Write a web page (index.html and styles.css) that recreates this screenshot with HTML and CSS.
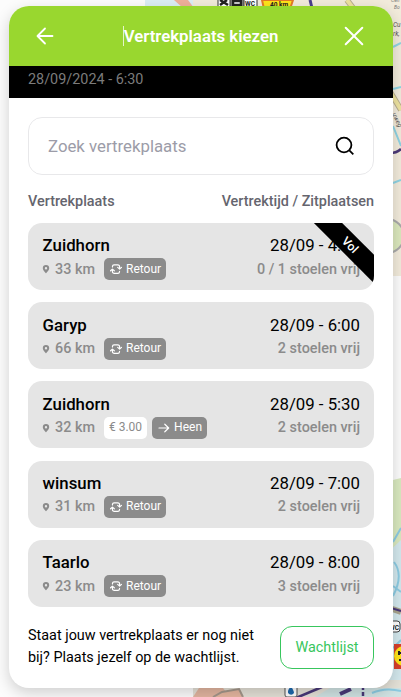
FILE: index.html
```html
<!DOCTYPE html>
<html lang="nl">
<head>
    <meta charset="UTF-8">
    <meta name="viewport" content="width=device-width, initial-scale=1.0">
    <title>Vertrekplaats kiezen</title>
    <link rel="stylesheet" href="styles.css">
</head>
<body>
    <!-- map tiles behind the panel -->
    <svg class="map" width="401" height="697" viewBox="0 0 401 697" fill="none">
        <path d="M193 0H401V276H193Z" fill="#f2ebdb"/>
        <path d="M145 0H193V9H145Z" fill="#dceef5"/>
        <path d="M174 0H188L194 8H183Z" fill="#efb09a"/>
        <path d="M310 0L312 8" stroke="#4b3f8c" stroke-width="3"/>
        <path d="M347 0L353 8M380 75L401 110" stroke="#b8ae8f" stroke-width="6"/>
        <path d="M347 0L353 8M380 75L401 110" stroke="#eee3a0" stroke-width="4"/>
        <path d="M393 47L401 43M393 89L401 87M393 126L401 146M393 183L401 180" stroke="#8fd3e3" stroke-width="2"/>
        <path d="M390 153Q397 153 401 149" stroke="#4b3a78" stroke-width="2.5"/>
        <circle cx="387" cy="236" r="17" fill="#dbe8bd" stroke="#aaa" stroke-width="2"/>
        <path d="M218 -4h12v12h-12zM231 -4h12v12h-12zM244 -4h13v12h-13z" fill="#fff" stroke="#333"/>
        <path d="M220 0l8 5M220 5l7-5M233 1h8v4h-8z" stroke="#222" stroke-width="2.5"/>
        <path d="M262 0H293L290 9H264Z" fill="#ffe51a" stroke="#e47b26" stroke-width="2"/>
        <text x="245" y="6" class="map-sign">WC</text>
        <text x="270" y="7" class="map-sign">40 km</text>
        <text x="391" y="2" class="map-label">Cen</text>
        <text x="394" y="9" class="map-label">Bo</text>
        <text x="393" y="27" class="map-label map-label-big">Cu</text>
        <text x="393" y="36" class="map-label map-label-big">rk,</text>
        <text x="392" y="114" class="map-label map-label-big" transform="rotate(65 392 114)">uweg</text>

        <path d="M385 482L401 478V697H385Z" fill="#d9e9bf"/>
        <path d="M385 555L401 540V697H385Z" fill="#d3e8ed"/>
        <path d="M393 542L401 528M393 596Q404 575 394 562M393 586L401 592M393 648L401 640" stroke="#8ccbe2" stroke-width="2"/>
        <path d="M375 603L401 612" stroke="#a9a58f" stroke-width="6"/>
        <path d="M375 603L401 611" stroke="#493878" stroke-width="2"/>
        <rect x="385" y="621" width="15" height="11" rx="3" fill="#fff" stroke="#444"/>
        <text x="389" y="630" class="map-sign">WC</text>
        <path d="M394 644h10v25h-10z" fill="#d8402c"/>
        <circle cx="404" cy="656" r="10" fill="#ffe51a"/>
        <path d="M398 653h4M399 660h3M399 651v4" stroke="#222" stroke-width="2"/>
        <path d="M193 680H401V697H193Z" fill="#e4e1d7"/>
        <path d="M193 697L199 688H223L230 697Z" fill="#e2b5a0"/>
        <path d="M213 697L222 692L239 689L243 697" fill="#e6b7a0" stroke="#a4978b" stroke-width="2"/>
        <path d="M315 697L330 688H401V697Z" fill="#d0e3e3"/>
        <path d="M296 698L322 687" stroke="#493878" stroke-width="2.5"/>
        <path d="M363 686V697" stroke="#493878" stroke-width="2.5" stroke-dasharray="4 2"/>
        <path d="M340 694L351 689" stroke="#493878" stroke-width="4"/>
        <path d="M372 693Q385 687 401 691" stroke="#8ccbe2" stroke-width="2"/>
        <rect x="285" y="683" width="12" height="14" rx="2" fill="#fff" stroke="#555"/>
        <path d="M291 686q-5 6-2 8q3 2 5-1q0-2-3-7z" fill="#1c68ad"/>
    </svg>

    <!-- shared icons -->
    <svg class="sprite">
        <symbol id="pin" viewBox="0 0 8 10">
            <path fill-rule="evenodd" d="M4 1a3.2 3.2 0 0 0-3.2 3.2C.8 6.4 4 9.2 4 9.2s3.2-2.8 3.2-5A3.2 3.2 0 0 0 4 1zm0 2a1.2 1.2 0 1 1 0 2.4A1.2 1.2 0 0 1 4 3z" fill="currentColor"/>
        </symbol>
        <symbol id="retour" viewBox="0 0 12 12">
            <path d="M2.5 4V3.2q.2-1.4 1.5-1.4h3.6q2 0 2 2v2M7.7 4.4l1.9 1.7 1.9-1.7M9.5 8.4v.5q-.2 1.5-1.5 1.5H4.4q-2 0-2-2v-2M.5 7.8l1.9-1.7 1.9 1.7" fill="none" stroke="currentColor" stroke-width="1.2" stroke-linecap="round" stroke-linejoin="round"/>
        </symbol>
        <symbol id="heen" viewBox="0 0 12 12">
            <path d="M1 6h9.7M6.8 2.2L10.7 6 6.8 9.8" fill="none" stroke="currentColor" stroke-width="1.2" stroke-linecap="round" stroke-linejoin="round"/>
        </symbol>
    </svg>

    <div class="panel">
        <div class="header">
            <svg class="back" width="18" height="18" viewBox="0 0 18 18"><path d="M16.5 9H1.7M9 1.5L1.5 9 9 16.5"/></svg>
            <h1>Vertrekplaats kiezen</h1>
            <svg class="close" width="20" height="20" viewBox="0 0 20 20"><path d="M1.7 1.7l16.6 16.6M18.3 1.7L1.7 18.3"/></svg>
        </div>
        <div class="date-bar">28/09/2024 - 6:30</div>

        <div class="content">
            <div class="search">
                <span>Zoek vertrekplaats</span>
                <svg width="20" height="20" viewBox="0 0 20 20"><circle cx="9" cy="9" r="7.4"/><path d="M14.3 14.3l4 4"/></svg>
            </div>

            <div class="labels">
                <span>Vertrekplaats</span>
                <span>Vertrektijd / Zitplaatsen</span>
            </div>

            <div class="list">
                <div class="stop">
                    <div class="row"><span class="place">Zuidhorn</span><span class="time">28/09 - 4:30</span></div>
                    <div class="row info">
                        <div class="details">
                            <svg class="pin"><use href="#pin"/></svg><span class="km">33 km</span>
                            <span class="tag"><svg><use href="#retour"/></svg>Retour</span>
                        </div>
                        <span>0 / 1 stoelen vrij</span>
                    </div>
                    <div class="ribbon">Vol</div>
                </div>
                <div class="stop">
                    <div class="row"><span class="place">Garyp</span><span class="time">28/09 - 6:00</span></div>
                    <div class="row info">
                        <div class="details">
                            <svg class="pin"><use href="#pin"/></svg><span class="km">66 km</span>
                            <span class="tag"><svg><use href="#retour"/></svg>Retour</span>
                        </div>
                        <span>2 stoelen vrij</span>
                    </div>
                </div>
                <div class="stop">
                    <div class="row"><span class="place">Zuidhorn</span><span class="time">28/09 - 5:30</span></div>
                    <div class="row info">
                        <div class="details">
                            <svg class="pin"><use href="#pin"/></svg><span class="km">32 km</span>
                            <span class="tag price">€ 3.00</span>
                            <span class="tag"><svg><use href="#heen"/></svg>Heen</span>
                        </div>
                        <span>2 stoelen vrij</span>
                    </div>
                </div>
                <div class="stop">
                    <div class="row"><span class="place">winsum</span><span class="time">28/09 - 7:00</span></div>
                    <div class="row info">
                        <div class="details">
                            <svg class="pin"><use href="#pin"/></svg><span class="km">31 km</span>
                            <span class="tag"><svg><use href="#retour"/></svg>Retour</span>
                        </div>
                        <span>2 stoelen vrij</span>
                    </div>
                </div>
                <div class="stop">
                    <div class="row"><span class="place">Taarlo</span><span class="time">28/09 - 8:00</span></div>
                    <div class="row info">
                        <div class="details">
                            <svg class="pin"><use href="#pin"/></svg><span class="km">23 km</span>
                            <span class="tag"><svg><use href="#retour"/></svg>Retour</span>
                        </div>
                        <span>3 stoelen vrij</span>
                    </div>
                </div>
            </div>

            <div class="footer">
                <p>Staat jouw vertrekplaats er nog niet<br>bij? Plaats jezelf op de wachtlijst.</p>
                <button>Wachtlijst</button>
            </div>
        </div>
    </div>
</body>
</html>
```
FILE: styles.css
```css
* {
    box-sizing: border-box;
}
body {
    margin: 0;
    padding: 6px 8px 9px 9px;
    height: 697px;
    overflow: hidden;
    font-family: Roboto, "Liberation Sans", sans-serif;
    background-color: #fcfcfc;
    color: #000;
}
.map {
    position: absolute;
    top: 0;
    left: 0;
    z-index: -1;
}
.map-sign {
    font-size: 6.5px;
    font-weight: bold;
    fill: #222;
}
.map-label {
    font-size: 5px;
    font-style: italic;
    fill: #777;
}
.map-label-big {
    font-size: 6.5px;
    fill: #555;
}
.sprite {
    display: none;
}
.panel {
    height: 682px;
    background: white;
    border-radius: 20px;
    overflow: hidden;
    box-shadow: 0 5px 15px rgba(0, 0, 0, 0.18);
}
.header {
    height: 60px;
    padding: 0 29px 0 27px;
    display: flex;
    align-items: center;
    justify-content: space-between;
    background-color: #99d72f;
    color: white;
}
.header svg {
    fill: none;
    stroke: white;
    stroke-width: 1.8;
    stroke-linecap: round;
    stroke-linejoin: round;
}
.header .close {
    stroke-width: 2;
}
.header h1 {
    margin: 0 0 0 3px;
    border-left: 1px solid #e4f5c8;
    font-size: 16.8px;
    font-weight: 600;
    line-height: 20px;
}
.date-bar {
    height: 32px;
    padding: 4px 19px;
    background: black;
    color: #7c7c7c;
    font-size: 14.4px;
    line-height: 19px;
}
.content {
    padding: 19px 19px 0;
}
.search {
    height: 58px;
    padding: 0 18px 0 19px;
    display: flex;
    align-items: center;
    justify-content: space-between;
    border: 1px solid #e8e8ea;
    border-radius: 14px;
    color: #9c9ca8;
    font-size: 16.8px;
}
.search svg {
    fill: none;
    stroke: black;
    stroke-width: 1.8;
}
.labels {
    display: flex;
    justify-content: space-between;
    margin: 17px 0 11px;
    color: #65656e;
    font-size: 14.4px;
    font-weight: 500;
    line-height: 20px;
}
.list {
    display: flex;
    flex-direction: column;
    gap: 12.2px;
}
.stop {
    position: relative;
    height: 67px;
    padding: 10.4px 14px 0;
    overflow: hidden;
    background: #e5e5e5;
    border-radius: 14px;
}
.row {
    display: flex;
    justify-content: space-between;
    align-items: center;
    height: 24px;
    font-size: 16.8px;
}
.place {
    margin-left: 0.6px;
    font-weight: 500;
}
.info {
    color: #8b8b8b;
    font-size: 14.4px;
    font-weight: 500;
}
.details {
    display: flex;
    align-items: center;
}
.pin {
    width: 8px;
    height: 10px;
    margin-right: 5px;
}
.km {
    margin-right: 9px;
}
.tag {
    display: flex;
    align-items: center;
    gap: 4px;
    height: 22px;
    margin-right: 5px;
    padding: 0 5px 1px 6px;
    border-radius: 5px;
    background: #8b8b8b;
    color: white;
    font-size: 12px;
    font-weight: 450;
}
.tag svg {
    width: 12px;
    height: 12px;
    margin-top: 1px;
}
.price {
    padding: 0 5px 1px;
    background: white;
    color: #8b8b8b;
    font-weight: 400;
}
.ribbon {
    position: absolute;
    top: 12px;
    right: -31px;
    width: 110px;
    height: 20px;
    background: black;
    color: white;
    font-size: 12px;
    font-weight: 500;
    line-height: 20px;
    text-align: center;
    transform: rotate(45deg);
}
.footer {
    display: flex;
    justify-content: space-between;
    align-items: center;
    margin-top: 19px;
}
.footer p {
    margin: -1px 0 1px;
    font-size: 14.4px;
    line-height: 22px;
}
.footer button {
    width: 94px;
    height: 43px;
    padding: 0;
    border: 1px solid #38c65d;
    border-radius: 12px;
    background: white;
    color: #38c65d;
    font-family: inherit;
    font-size: 14.4px;
}
```
